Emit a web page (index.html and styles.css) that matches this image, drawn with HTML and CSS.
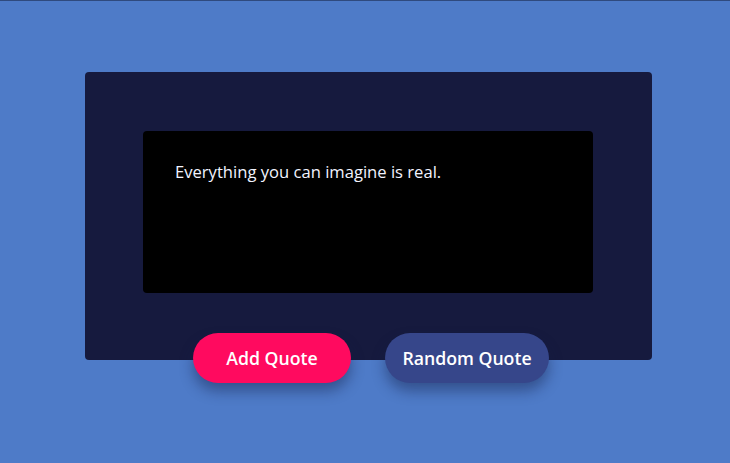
FILE: index.html
```html
<!DOCTYPE html>
<html>
<head>
<meta charset="utf-8">
<link rel="stylesheet" href="styles.css">
</head>
<body>
<div class="page">
  <div class="card">
    <div class="quote-box">
      <p class="quote">Everything you can imagine is real.</p>
    </div>
    <div class="actions">
      <button class="btn btn-add">Add Quote</button>
      <button class="btn btn-random">Random Quote</button>
    </div>
  </div>
</div>
</body>
</html>
```
FILE: styles.css
```css
html, body {
  margin: 0;
  padding: 0;
}
body {
  background: #4e7bc8;
  border-top: 1px solid #2f4a7e;
  font-family: "Open Sans", sans-serif;
  height: 462px;
  overflow: hidden;
}
.page {
  padding-top: 71px;
  display: flex;
  justify-content: center;
}
.card {
  width: 567px;
  margin-left: 7px;
  box-sizing: border-box;
  background: #161a3e;
  border-radius: 4px;
  padding: 59px 59px 0 58px;
}
.quote-box {
  background: #000;
  border-radius: 4px;
  height: 162px;
  padding: 29px 32px;
  box-sizing: border-box;
}
.quote {
  margin: 0;
  color: #f2f4ff;
  font-size: 16.6px;
  line-height: 24px;
}
.actions {
  display: flex;
  justify-content: center;
  gap: 34px;
  margin-top: 40px;
  margin-bottom: -23px;
  padding-left: 6px;
}
.btn {
  height: 50px;
  border: none;
  border-radius: 25px;
  color: #fff;
  font-family: "Open Sans", sans-serif;
  font-weight: 600;
  font-size: 17.7px;
  padding: 0;
  box-shadow: 0 8px 14px rgba(20, 30, 70, 0.45);
}
.btn-add {
  width: 158px;
  background: #ff0a5f;
}
.btn-random {
  width: 164px;
  background: #36468a;
}
```
